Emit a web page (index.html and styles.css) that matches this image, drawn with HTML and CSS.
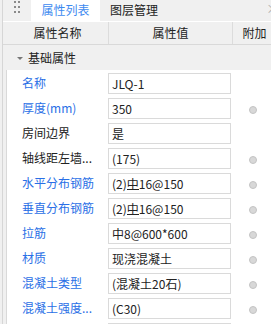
FILE: index.html
```html
<!DOCTYPE html>
<html lang="zh-CN">
<head>
    <meta charset="UTF-8">
    <title>属性列表</title>
    <link rel="stylesheet" href="styles.css">
</head>
<body>
    <div class="panel">
        <!-- Tabs -->
        <div class="tabbar">
            <div class="handle">
                <span></span><span></span>
                <span></span><span></span>
                <span></span><span></span>
            </div>
            <div class="tab active">属性列表</div>
            <div class="tab">图层管理</div>
            <div class="close">×</div>
        </div>

        <!-- Column header -->
        <div class="thead">
            <div class="th th-name">属性名称</div>
            <div class="th th-value">属性值</div>
            <div class="th th-extra">附加</div>
        </div>

        <div class="group">
            <span class="caret"></span>
            <span>基础属性</span>
        </div>

        <div class="rows">
            <div class="row">
                <div class="name blue">名称</div>
                <div class="value">JLQ-1</div>
                <div class="extra"></div>
            </div>
            <div class="row">
                <div class="name blue">厚度(mm)</div>
                <div class="value">350</div>
                <div class="extra"><span class="dot"></span></div>
            </div>
            <div class="row">
                <div class="name">房间边界</div>
                <div class="value">是</div>
                <div class="extra"></div>
            </div>
            <div class="row">
                <div class="name">轴线距左墙...</div>
                <div class="value">(175)</div>
                <div class="extra"><span class="dot"></span></div>
            </div>
            <div class="row">
                <div class="name blue">水平分布钢筋</div>
                <div class="value">(2)<span class="bar">中</span>16@150</div>
                <div class="extra"><span class="dot"></span></div>
            </div>
            <div class="row">
                <div class="name blue">垂直分布钢筋</div>
                <div class="value">(2)<span class="bar">中</span>16@150</div>
                <div class="extra"><span class="dot"></span></div>
            </div>
            <div class="row">
                <div class="name blue">拉筋</div>
                <div class="value">中8@600*600</div>
                <div class="extra"><span class="dot"></span></div>
            </div>
            <div class="row">
                <div class="name blue">材质</div>
                <div class="value">现浇混凝土</div>
                <div class="extra"><span class="dot"></span></div>
            </div>
            <div class="row">
                <div class="name blue">混凝土类型</div>
                <div class="value">(混凝土20石)</div>
                <div class="extra"><span class="dot"></span></div>
            </div>
            <div class="row">
                <div class="name blue">混凝土强度...</div>
                <div class="value">(C30)</div>
                <div class="extra"><span class="dot"></span></div>
            </div>
            <div class="row">
                <div class="name"></div>
                <div class="value"></div>
                <div class="extra"></div>
            </div>
        </div>
    </div>
</body>
</html>
```

FILE: styles.css
```css
* {
    margin: 0;
    padding: 0;
    box-sizing: border-box;
}

body {
    width: 271px;
    height: 324px;
    overflow: hidden;
    background: #f0f0f0;
    font-family: "Noto Sans CJK SC", sans-serif;
    font-size: 12px;
    color: #333333;
}

.panel {
    margin-left: 2px;
    border-left: 1px solid #d6d6d6;
    height: 324px;
    width: 269px;
    overflow: hidden;
}

/* Tab bar */
.tabbar {
    display: flex;
    height: 21px;
    background: #f0f0f0;
    position: relative;
}

.handle {
    width: 28px;
    display: grid;
    grid-template-columns: 2px 2px;
    grid-auto-rows: 2px;
    column-gap: 2px;
    row-gap: 3px;
    padding: 1px 0 0 11px;
}

.handle span {
    background: #8a8a8a;
}

.tab {
    height: 21px;
    line-height: 20px;
    padding: 0 10px;
    color: #222222;
}

.tab.active {
    width: 69px;
    text-align: center;
    background: #ffffff;
    color: #3d8af0;
}

.close {
    position: absolute;
    left: 263px;
    top: 1px;
    color: #b0b0b0;
    font-size: 13px;
    line-height: 14px;
}

/* Header */
.thead {
    display: flex;
    height: 24px;
    border-top: 1px solid #ffffff;
    border-bottom: 1px solid #d9d9d9;
    background: #f0f0f0;
    line-height: 22px;
    color: #222222;
}

.th {
    text-align: center;
    border-right: 1px solid #dcdcdc;
    flex-shrink: 0;
}

.th-name {
    width: 106px;
    padding-left: 4px;
}

.th-value {
    width: 124px;
}

.th-extra {
    width: 42px;
    padding-left: 1px;
    border-right: none;
}

/* Group */
.group {
    display: flex;
    align-items: center;
    height: 25px;
    background: #f0f0f0;
    padding-left: 14px;
    gap: 5px;
    color: #222222;
}

.caret {
    width: 0;
    height: 0;
    border-left: 3px solid transparent;
    border-right: 3px solid transparent;
    border-top: 3px solid #777777;
    margin-top: 1px;
}

/* Rows */
.rows {
    background: #ffffff;
    margin-left: 3px;
    border-left: 1px solid #d9d9d9;
    height: 260px;
}

.row {
    display: flex;
    height: 25px;
}

.name {
    width: 101px;
    flex-shrink: 0;
    padding-left: 15px;
    line-height: 26px;
    white-space: nowrap;
    overflow: hidden;
    color: #222222;
}

.name.blue {
    color: #2a6fe6;
}

.value {
    width: 123px;
    flex-shrink: 0;
    height: 21px;
    margin-top: 3px;
    border: 1px solid #dadada;
    padding-left: 3px;
    line-height: 19px;
    color: #222222;
    white-space: nowrap;
}

.bar {
    display: inline-block;
    line-height: 11px;
    border-bottom: 1px solid #222222;
    height: 12px;
}

.extra {
    width: 44px;
    flex-shrink: 0;
    display: flex;
    align-items: center;
    justify-content: center;
    padding-top: 4px;
    padding-right: 1px;
}

.dot {
    width: 8px;
    height: 8px;
    border-radius: 50%;
    background: #d8d8d8;
    border: 1px solid #c4c4c4;
}
```
